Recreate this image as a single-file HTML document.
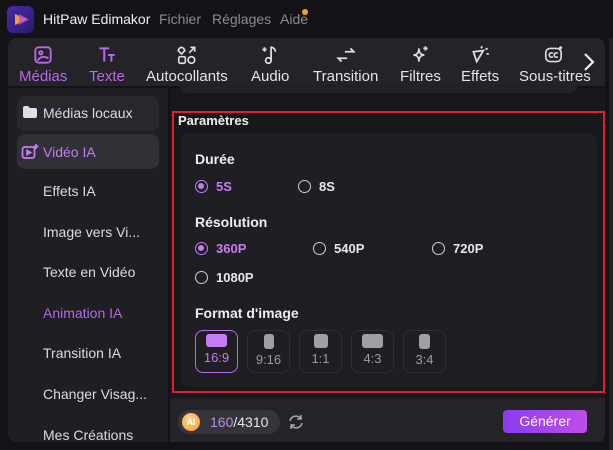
<!DOCTYPE html>
<html><head><meta charset="utf-8"><style>
*{margin:0;padding:0;box-sizing:border-box}
body{width:613px;height:450px;background:#131216;font-family:"Liberation Sans",sans-serif;color:#e6e6e8;position:relative;overflow:hidden}
.abs{position:absolute}
.t{font-size:14px;color:#8c8b92;top:11px}
.tb{left:8px;top:38px;width:597px;height:48px;background:#242328;border-radius:9px 9px 0 0}
.ti{position:absolute;top:0;text-align:center;font-size:15px;color:#e4e4e6}
.ti svg{display:block;margin:6px auto 2px;width:22px;height:22px}
.side{left:8px;top:88px;width:160px;height:354px;background:#1f1e23;border-radius:0 0 0 8px}
.si{position:absolute;left:35px;font-size:14px;color:#dcdce0}
.main{left:170px;top:88px;width:435px;height:354px;background:#18171b}
.red{left:172px;top:111px;width:433px;height:282px;border:2.5px solid #e0212b}
.card{left:181px;top:133px;width:416px;height:254px;background:#1f1f23;border-radius:8px}
.lbl{position:absolute;font-weight:bold;font-size:14px;color:#eee}
.r{position:absolute;font-weight:bold;font-size:13px;color:#e8e8ea;display:flex;align-items:center}
.r i{width:13px;height:13px;border:1.3px solid #d0d0d4;border-radius:50%;margin-right:8px;display:inline-block;position:relative}
.r.on{color:#c57df2}
.r.on i{border-color:#c57df2}
.r.on i:after{content:"";position:absolute;left:2.2px;top:2.2px;width:6px;height:6px;border-radius:50%;background:#c57df2}
.fm{position:absolute;top:330px;width:43px;height:43px;border:1.3px solid #2e2e34;border-radius:8px;text-align:center;font-size:13px;color:#9a9aa0}
.fm b{display:block;margin:3px auto 3px;background:#a0a0a4;border-radius:3px}
</style></head><body>
<div class="abs" style="left:7px;top:6px;width:27px;height:27px;border-radius:6px;background:linear-gradient(135deg,#4b2aa8,#2a1a6a)"></div>
<svg class="abs" style="left:12px;top:12px" width="18" height="15"><path d="M3 2L15 7.5L3 13Z" fill="#f0a23a"/><path d="M7 2L17 7.5L7 13Z" fill="#c24df0" opacity=".8"/></svg>
<div class="abs" style="left:43px;top:11px;font-size:14px;color:#f0f0f2">HitPaw Edimakor</div>
<div class="abs t" style="left:159px">Fichier</div>
<div class="abs t" style="left:212px">Réglages</div>
<div class="abs t" style="left:280px">Aide</div>
<div class="abs" style="left:302px;top:9px;width:6px;height:6px;border-radius:50%;background:#f4a424"></div>

<div class="abs tb">
<div class="ti" style="left:11px;color:#b66ae8"><svg viewBox="0 0 20 20" fill="none" stroke="#b66ae8" stroke-width="1.7"><rect x="3" y="3" width="14" height="14" rx="3"/><circle cx="8" cy="8" r="1.5"/><path d="M5 15c3-4 6-4 10-2"/></svg>Médias</div>
<div class="ti" style="left:81px;color:#b66ae8"><svg viewBox="0 0 20 20" fill="none" stroke="#b66ae8" stroke-width="1.8"><path d="M3 4h9M7.5 4v12M11 10h6M14 10v6"/></svg>Texte</div>
<div class="ti" style="left:138px"><svg viewBox="0 0 20 20" fill="none" stroke="#ddd" stroke-width="1.5"><path d="M3 4l2 -1 2 1 1 2-3 3-3-3z"/><path d="M12 8l5-5M13 3h4v4"/><rect x="2.5" y="11.5" width="6" height="6" rx="1.5"/><circle cx="14" cy="14.5" r="3"/></svg>Autocollants</div>
<div class="ti" style="left:243px"><svg viewBox="0 0 20 20" fill="none" stroke="#ddd" stroke-width="1.6"><path d="M11 15V3c2 0 4 2 4 4"/><circle cx="8.5" cy="15" r="2.5"/><path d="M3 5h4M5 3v4"/></svg>Audio</div>
<div class="ti" style="left:305px"><svg viewBox="0 0 20 20" fill="none" stroke="#ddd" stroke-width="1.6"><path d="M9 7h8l-3-3M11 13H3l3 3"/></svg>Transition</div>
<div class="ti" style="left:392px"><svg viewBox="0 0 20 20" fill="none" stroke="#ddd" stroke-width="1.6"><path d="M9 4c0 4 2 6 5 6-3 0-5 2-5 6 0-4-2-6-5-6 3 0 5-2 5-6z"/><path d="M15 2v4M13 4h4"/></svg>Filtres</div>
<div class="ti" style="left:453px"><svg viewBox="0 0 20 20" fill="none" stroke="#ddd" stroke-width="1.6"><path d="M4 7l9-1-6 10z"/><path d="M12 2l-1 2M16 9h2M15 5l2-1"/></svg>Effets</div>
<div class="ti" style="left:511px;width:75px;overflow:hidden;text-align:left;white-space:nowrap"><svg viewBox="0 0 20 20" fill="none" stroke="#ddd" stroke-width="1.5" style="margin-left:24px"><rect x="2.5" y="4" width="14" height="12" rx="4"/><path d="M9 8.5a2 2 0 1 0 0 3M13.5 8.5a2 2 0 1 0 0 3M16 2v3M14.5 3.5h3"/></svg>Sous-titres</div>
<svg class="abs" style="left:574px;top:14px" width="14" height="20"><path d="M3 2l8 8-8 8" stroke="#eee" stroke-width="2.2" fill="none"/></svg>
</div>
<div class="abs" style="left:609px;top:38px;width:4px;height:412px;background:#222126"></div>

<div class="abs side">
<div class="abs" style="left:9px;top:8px;width:142px;height:35px;background:#28272c;border-radius:8px"></div>
<div class="abs" style="left:9px;top:46px;width:142px;height:35px;background:#313036;border-radius:8px"></div>
<svg class="abs" style="left:14px;top:17px" width="16" height="14"><path d="M1 3a2 2 0 0 1 2-2h3l2 2h5a2 2 0 0 1 2 2v6a2 2 0 0 1-2 2H3a2 2 0 0 1-2-2z" fill="#e0e0e4"/></svg>
<div class="si" style="top:17px">Médias locaux</div>
<svg class="abs" style="left:13px;top:55px" width="18" height="17" fill="none" stroke="#c57df2" stroke-width="1.7"><rect x="1.5" y="4" width="12" height="11" rx="2"/><path d="M6 7.5v4l3.5-2z" fill="#c57df2"/><path d="M15 1v5M12.5 3.5h5"/></svg>
<div class="si" style="top:56px;color:#c57df2">Vidéo IA</div>
<div class="si" style="top:95px">Effets IA</div>
<div class="si" style="top:136px">Image vers Vi...</div>
<div class="si" style="top:176px">Texte en Vidéo</div>
<div class="si" style="top:217px;color:#b06ae4">Animation IA</div>
<div class="si" style="top:257px">Transition IA</div>
<div class="si" style="top:298px">Changer Visag...</div>
<div class="si" style="top:339px">Mes Créations</div>
</div>

<div class="abs main"></div>
<div class="abs" style="left:180px;top:84px;width:398px;height:9px;background:#222126;border-radius:0 0 8px 8px"></div>
<div class="abs red"></div>
<div class="abs" style="left:178px;top:113px;font-weight:bold;font-size:13px;color:#eee">Paramètres</div>
<div class="abs card"></div>
<div class="lbl" style="left:195px;top:151px">Durée</div>
<div class="r on" style="left:195px;top:179px"><i></i>5S</div>
<div class="r" style="left:298px;top:179px"><i></i>8S</div>
<div class="lbl" style="left:195px;top:214px">Résolution</div>
<div class="r on" style="left:195px;top:241px"><i></i>360P</div>
<div class="r" style="left:313px;top:241px"><i></i>540P</div>
<div class="r" style="left:432px;top:241px"><i></i>720P</div>
<div class="r" style="left:195px;top:270px"><i></i>1080P</div>
<div class="lbl" style="left:195px;top:305px">Format d'image</div>
<div class="fm" style="left:195px;border-color:#b66ae8;color:#c57df2"><b style="width:21px;height:13px;background:#c57df2"></b>16:9</div>
<div class="fm" style="left:247px"><b style="width:10px;height:15px"></b>9:16</div>
<div class="fm" style="left:299px"><b style="width:14px;height:14px"></b>1:1</div>
<div class="fm" style="left:351px"><b style="width:21px;height:14px"></b>4:3</div>
<div class="fm" style="left:403px"><b style="width:11px;height:15px"></b>3:4</div>

<div class="abs" style="left:170px;top:398px;width:435px;height:44px;background:#242328;border-radius:0 0 8px 0"></div>
<div class="abs" style="left:178px;top:410px;width:102px;height:24px;background:#35343a;border-radius:12px"></div>
<div class="abs" style="left:182px;top:413px;width:18px;height:18px;border-radius:50%;background:radial-gradient(circle at 40% 35%,#ffd28a,#f39a2e);color:#fff;font-size:9px;font-weight:bold;text-align:center;line-height:18px">AI</div>
<div class="abs" style="left:210px;top:414px;font-size:14px;color:#e8e8ea"><span style="color:#b88de8">160</span>/4310</div>
<svg class="abs" style="left:287px;top:413px" width="18" height="18" fill="none" stroke="#aaa" stroke-width="1.5"><path d="M3 8a6 6 0 0 1 11-2M15 10a6 6 0 0 1-11 2M14 2v4h-4M4 16v-4h4"/></svg>
<div class="abs" style="left:503px;top:410px;width:84px;height:23px;border-radius:4px;background:linear-gradient(90deg,#8a3cf0,#c04de6);font-size:14px;color:#fff;text-align:center;line-height:23px">Générer</div>
</body></html>
